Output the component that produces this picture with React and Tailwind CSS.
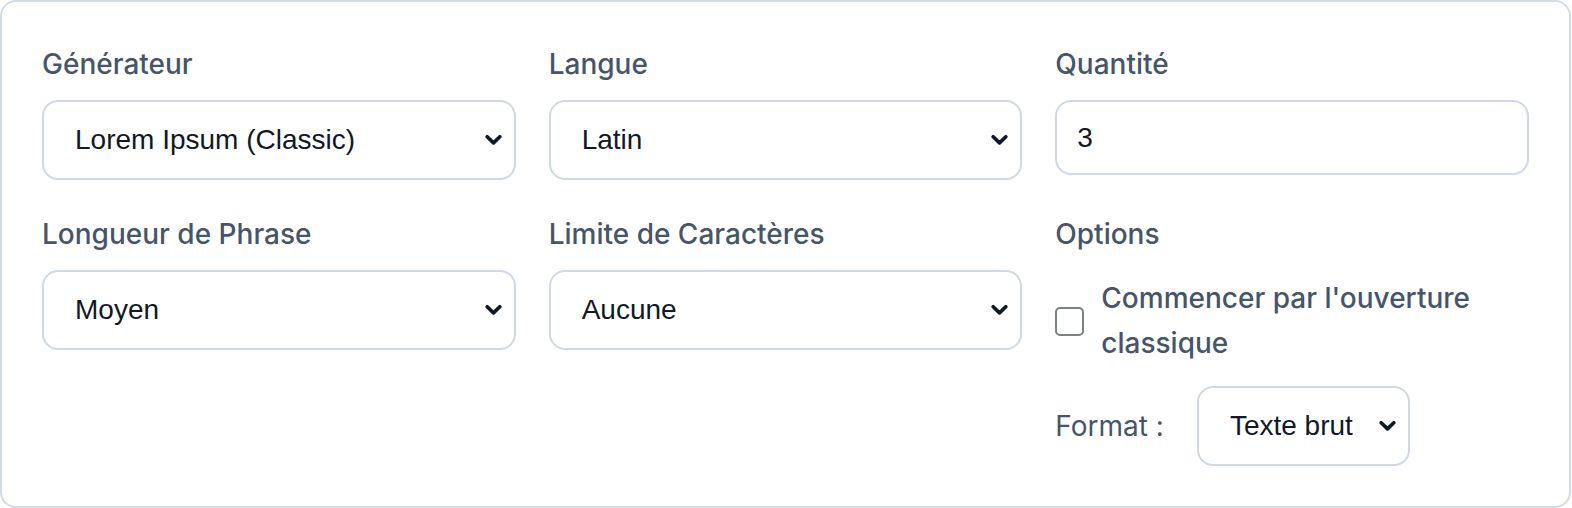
function Chevron() {
  return (
    <svg
      className="pointer-events-none absolute right-[14px] top-1/2 -translate-y-1/2"
      width="17"
      height="11"
      viewBox="0 0 17 11"
      fill="none"
    >
      <path d="M2.2 2.2 L8.5 8.4 L14.8 2.2" stroke="#111827" strokeWidth="3.6" strokeLinecap="round" strokeLinejoin="round" />
    </svg>
  )
}

function Select({ value, options, className = 'w-full' }) {
  return (
    <div className={`relative ${className}`}>
      <select
        defaultValue={value}
        className="h-[80px] w-full appearance-none rounded-[16px] border-2 border-[#cfd8e3] bg-white pl-[31px] pr-[50px] font-['Liberation_Sans',Arial,sans-serif] text-[28px] text-[#111827] outline-none"
      >
        {options.map((o) => (
          <option key={o}>{o}</option>
        ))}
      </select>
      <Chevron />
    </div>
  )
}

function Label({ children }) {
  return <label className="mb-4 block text-[28px] font-medium leading-[40px] text-[#475569]">{children}</label>
}

export default function App() {
  return (
    <div className="bg-white font-['Inter',sans-serif]">
      <div className="w-[1571px] rounded-[16px] border-2 border-[#d3dbe6] bg-white px-[40px] pb-[40px] pt-[42px]">
        <div className="grid grid-cols-3 gap-x-[33px] gap-y-[34px]">
          <div>
            <Label>Générateur</Label>
            <Select value="Lorem Ipsum (Classic)" options={['Lorem Ipsum (Classic)', 'Bacon Ipsum', 'Hipster Ipsum']} />
          </div>
          <div>
            <Label>Langue</Label>
            <Select value="Latin" options={['Latin', 'Français', 'English']} />
          </div>
          <div>
            <Label>Quantité</Label>
            <input
              type="number"
              defaultValue={3}
              className="h-[75px] w-full rounded-[16px] border-2 border-[#cfd8e3] bg-white px-[20px] font-['Liberation_Sans',Arial,sans-serif] text-[28px] text-[#111827] outline-none"
            />
          </div>

          <div>
            <Label>Longueur de Phrase</Label>
            <Select value="Moyen" options={['Court', 'Moyen', 'Long']} />
          </div>
          <div>
            <Label>Limite de Caractères</Label>
            <Select value="Aucune" options={['Aucune', '100', '500']} />
          </div>
          <div>
            <Label>Options</Label>
            <div className="mt-[22px] flex items-center gap-[17px]">
              <span className="h-[29px] w-[29px] shrink-0 rounded-[5px] border-2 border-[#7b7f86] bg-white" />
              <span className="text-[28px] font-medium leading-[45px] text-[#475569]">
                Commencer par l'ouverture
                <br />
                classique
              </span>
            </div>
            <div className="mt-[20px] flex items-center gap-[33px]">
              <span className="text-[28px] leading-[40px] text-[#475569]">Format :</span>
              <Select value="Texte brut" options={['Texte brut', 'HTML', 'Markdown']} className="w-[213px]" />
            </div>
          </div>
        </div>
      </div>
    </div>
  )
}
